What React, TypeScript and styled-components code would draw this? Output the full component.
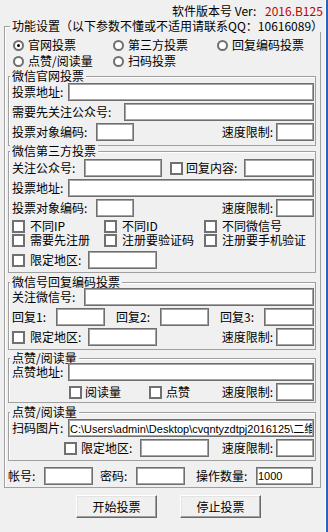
import React from "react";
import styled, { createGlobalStyle } from "styled-components";

const GlobalStyle = createGlobalStyle`
  html, body {
    margin: 0;
    padding: 0;
    background: #f0f0f0;
  }
  body {
    font-family: "Noto Sans CJK SC", "Liberation Sans", sans-serif;
    font-size: 12px;
    color: #000;
  }
`;

const Window = styled.div`
  width: 328px;
  height: 532px;
  overflow: hidden;
  background: #f0f0f0;
  box-shadow: inset -2px 0 0 #2a64b8, inset -3px 0 0 #fcfcfc;
`;

const Header = styled.div`
  display: flex;
  height: 14px;
  padding: 4px 0 0 172px;
  line-height: 14px;
  white-space: nowrap;
`;

const HeaderLabel = styled.span`
  width: 93px;
`;

const Version = styled.span`
  color: #c00000;
`;

const Frame = styled.div`
  width: 317px;
  margin: 8px 0 0 4px;
  padding: 0 0 2px 0;
  box-sizing: border-box;
  border: 1px solid #a0a0a0;
  box-shadow: inset 1px 1px 0 #fff;
`;

const Group = styled.div<{ $mt: number; $pb: number }>`
  width: 308px;
  margin: ${(p) => p.$mt}px 0 0 3px;
  padding: 0 1px ${(p) => p.$pb}px 3px;
  box-sizing: border-box;
  border: 1px solid #a0a0a0;
  box-shadow: inset 1px 1px 0 #fff;
`;

const Title = styled.div<{ $ml?: number }>`
  width: fit-content;
  height: 12px;
  margin: -7px 0 0 ${(p) => p.$ml ?? -2}px;
  padding: 0 2px;
  line-height: 12px;
  white-space: nowrap;
  background: #f0f0f0;
`;

const Row = styled.div<{ $mt?: number; $h?: number; $pl?: number }>`
  display: flex;
  align-items: center;
  height: ${(p) => p.$h ?? 18}px;
  margin-top: ${(p) => p.$mt ?? 2}px;
  padding-left: ${(p) => p.$pl ?? 0}px;
`;

const Label = styled.span<{ $w?: number; $ml?: number }>`
  flex: 0 0 auto;
  width: ${(p) => (p.$w ? `${p.$w}px` : "auto")};
  margin-left: ${(p) => p.$ml ?? 0}px;
  line-height: 14px;
  white-space: nowrap;
`;

const Input = styled.input<{ $w?: number; $ml?: number }>`
  flex: ${(p) => (p.$w ? `0 0 ${p.$w}px` : "1 1 0")};
  min-width: 0;
  height: 18px;
  margin: 0 0 0 ${(p) => p.$ml ?? 0}px;
  padding: 0 1px;
  box-sizing: border-box;
  border: 1px solid #6f6f6f;
  box-shadow: inset 0 0 0 1px #a3a3a3;
  background: #fff;
  font-family: "Liberation Sans", "Noto Sans CJK SC", sans-serif;
  font-size: 11px;
  color: #000;
  outline: none;
`;

const Spacer = styled.div`
  flex: 1;
`;

const Item = styled.div<{ $w?: number }>`
  display: flex;
  align-items: center;
  flex: 0 0 ${(p) => (p.$w ? `${p.$w}px` : "auto")};
`;

const Box = styled.span`
  flex: 0 0 13px;
  height: 13px;
  box-sizing: border-box;
  border: 2px solid #707070;
  background: #fff;
`;

const Radio = styled.span<{ $on?: boolean }>`
  display: flex;
  align-items: center;
  justify-content: center;
  flex: 0 0 11px;
  height: 11px;
  margin-right: 4px;
  box-sizing: border-box;
  border: 2px solid #707070;
  border-radius: 50%;
  background: #fff;

  &::after {
    content: "";
    display: ${(p) => (p.$on ? "block" : "none")};
    width: 3px;
    height: 3px;
    border-radius: 50%;
    background: #000;
  }
`;

const Buttons = styled.div`
  display: flex;
  gap: 23px;
  margin-top: 7px;
  padding-left: 76px;
`;

const Button = styled.button`
  width: 81px;
  height: 23px;
  padding: 0;
  box-sizing: border-box;
  border: 1px solid;
  border-color: #fff #696969 #696969 #fff;
  box-shadow: inset -1px -1px 0 #a0a0a0, inset 1px 1px 0 #e3e3e3;
  background: #f0f0f0;
  font-family: "Noto Sans CJK SC", sans-serif;
  font-size: 12px;
  color: #000;
`;

function Check({ text, ml = 5, w }: { text: string; ml?: number; w?: number }) {
  return (
    <Item $w={w}>
      <Box />
      <Label $ml={ml}>{text}</Label>
    </Item>
  );
}

function Speed() {
  return (
    <>
      <Spacer />
      <Label>速度限制:</Label>
      <Input $w={38} $ml={3} />
    </>
  );
}

const path = "C:\\Users\\admin\\Desktop\\cvqntyzdtpj2016125\\二维码投票.jpg";

export default function App() {
  return (
    <Window>
      <GlobalStyle />
      <Header>
        <HeaderLabel>软件版本号 Ver:</HeaderLabel>
        <Version>2016.B125</Version>
      </Header>

      <Frame>
        <Title $ml={5}>功能设置（以下参数不懂或不适用请联系QQ：10616089）</Title>
        <Row $mt={6} $h={14} $pl={8}>
          <Item $w={100}>
            <Radio $on />
            <Label>官网投票</Label>
          </Item>
          <Item $w={104}>
            <Radio />
            <Label>第三方投票</Label>
          </Item>
          <Item>
            <Radio />
            <Label>回复编码投票</Label>
          </Item>
        </Row>
        <Row $h={14} $pl={8}>
          <Item $w={100}>
            <Radio />
            <Label>点赞/阅读量</Label>
          </Item>
          <Item>
            <Radio />
            <Label>扫码投票</Label>
          </Item>
        </Row>

        <Group $mt={8} $pb={4}>
          <Title>微信官网投票</Title>
          <Row $mt={1}>
            <Label $w={56}>投票地址:</Label>
            <Input />
          </Row>
          <Row>
            <Label $w={112}>需要先关注公众号:</Label>
            <Input />
          </Row>
          <Row>
            <Label $w={84}>投票对象编码:</Label>
            <Input $w={38} />
            <Speed />
          </Row>
        </Group>

        <Group $mt={5} $pb={3}>
          <Title>微信第三方投票</Title>
          <Row>
            <Label $w={72}>关注公众号:</Label>
            <Input $w={78} />
            <Item>
              <Box style={{ marginLeft: 8 }} />
              <Label $ml={3} $w={58}>回复内容:</Label>
            </Item>
            <Input />
          </Row>
          <Row>
            <Label $w={56}>投票地址:</Label>
            <Input />
          </Row>
          <Row>
            <Label $w={84}>投票对象编码:</Label>
            <Input $w={38} />
            <Speed />
          </Row>
          <Row $h={14}>
            <Check w={92} text="不同IP" />
            <Check w={100} text="不同ID" />
            <Check text="不同微信号" />
          </Row>
          <Row $mt={0} $h={14}>
            <Check w={92} text="需要先注册" />
            <Check w={100} text="注册要验证码" />
            <Check text="注册要手机验证" />
          </Row>
          <Row $mt={4}>
            <Box />
            <Label $ml={5} $w={58}>限定地区:</Label>
            <Input $w={69} />
          </Row>
        </Group>

        <Group $mt={9} $pb={3}>
          <Title>微信号回复编码投票</Title>
          <Row $mt={0}>
            <Label $w={72}>关注微信号:</Label>
            <Input />
          </Row>
          <Row>
            <Label $w={44}>回复1:</Label>
            <Input $w={49} />
            <Label $w={44} $ml={11}>回复2:</Label>
            <Input $w={49} />
            <Label $w={44} $ml={11}>回复3:</Label>
            <Input />
          </Row>
          <Row>
            <Box />
            <Label $ml={5} $w={58}>限定地区:</Label>
            <Input $w={69} />
            <Speed />
          </Row>
        </Group>

        <Group $mt={8} $pb={1}>
          <Title>点赞/阅读量</Title>
          <Row $mt={-1}>
            <Label $w={56}>点赞地址:</Label>
            <Input />
          </Row>
          <Row $pl={57}>
            <Check w={80} ml={3} text="阅读量" />
            <Check ml={4} text="点赞" />
            <Speed />
          </Row>
        </Group>

        <Group $mt={9} $pb={3}>
          <Title>点赞/阅读量</Title>
          <Row $mt={1}>
            <Label $w={56}>扫码图片:</Label>
            <Input defaultValue={path} />
          </Row>
          <Row $pl={52}>
            <Box />
            <Label $ml={4} $w={59}>限定地区:</Label>
            <Input $w={69} />
            <Speed />
          </Row>
        </Group>

        <Row $mt={6} $pl={3}>
          <Label $w={36}>帐号:</Label>
          <Input $w={49} />
          <Label $w={36} $ml={7}>密码:</Label>
          <Input $w={49} />
          <Label $w={60} $ml={11}>操作数量:</Label>
          <Input $w={57} defaultValue="1000" />
        </Row>
      </Frame>

      <Buttons>
        <Button>开始投票</Button>
        <Button>停止投票</Button>
      </Buttons>
    </Window>
  );
}
